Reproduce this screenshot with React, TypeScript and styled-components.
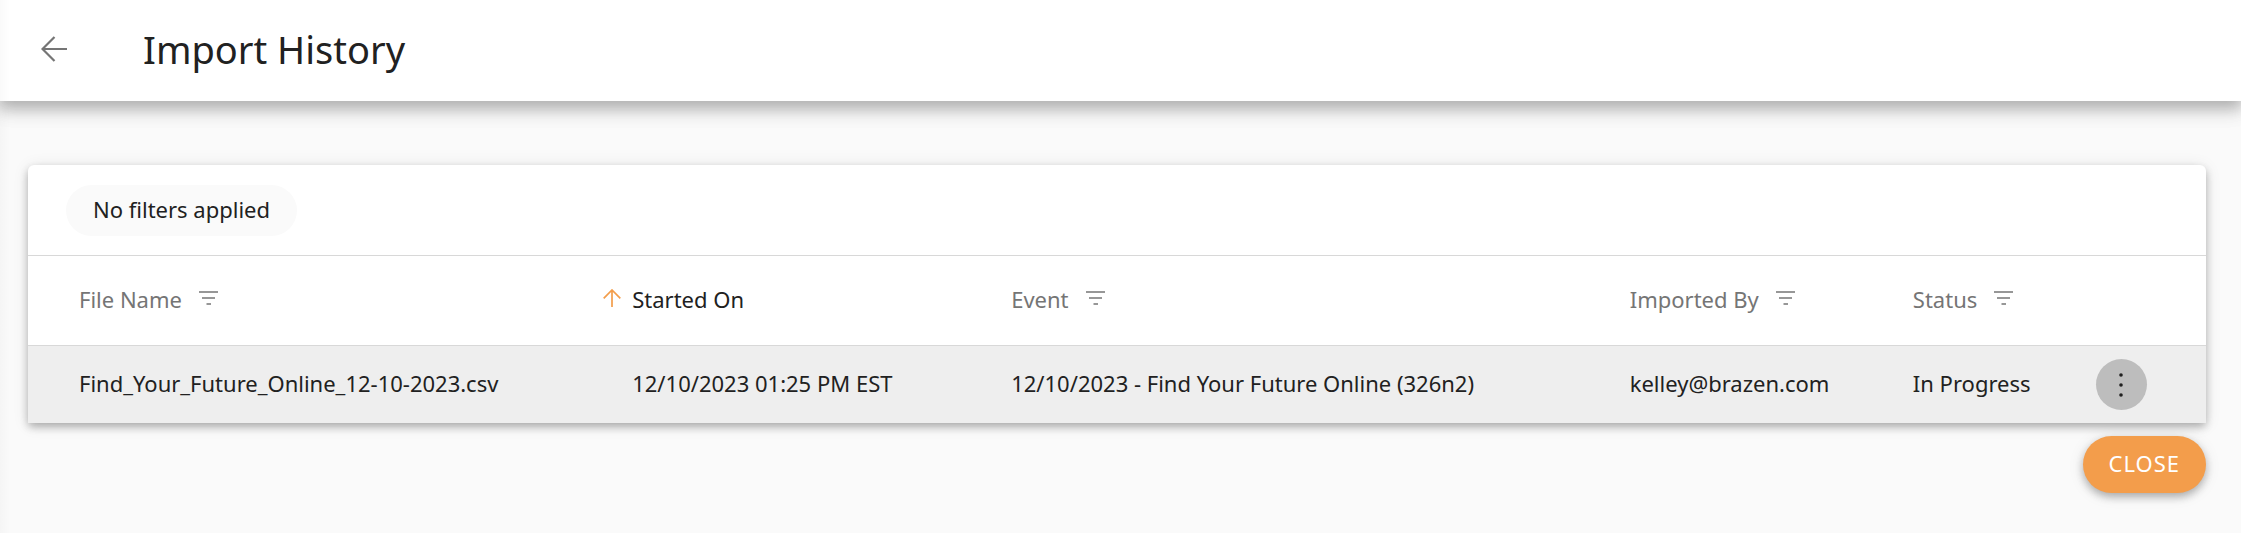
import React from "react";
import styled, { createGlobalStyle } from "styled-components";

const edgeShade = "linear-gradient(to right, rgba(0, 0, 0, 0.02), transparent 10px)";
const raised = `0 4px 8px -1px rgba(0, 0, 0, 0.2), 0 4px 10px rgba(0, 0, 0, 0.1),
  0 2px 16px rgba(0, 0, 0, 0.1)`;

const GlobalStyle = createGlobalStyle`
  *, *::before, *::after { box-sizing: border-box; }
  body {
    margin: 0;
    background: ${edgeShade}, #fafafa;
    color: #212121;
    font-family: "Noto Sans", sans-serif;
    font-size: 22px;
    line-height: 32px;
  }
  button { font: inherit; color: inherit; border: 0; background: none; padding: 0; cursor: pointer; }
`;

const Header = styled.header`
  display: flex;
  align-items: center;
  gap: 64px;
  height: 101px;
  padding: 0 28px 3px;
  background: ${edgeShade}, #fff;
  box-shadow: 0 6px 12px rgba(0, 0, 0, 0.16), 0 10px 16px 2px rgba(0, 0, 0, 0.1),
    0 5px 22px 3px rgba(0, 0, 0, 0.08);
`;

const BackButton = styled.button`
  display: flex;
  align-items: center;
  justify-content: center;
  width: 51px;
  height: 51px;
  color: #757575;
`;

const Title = styled.h1`
  margin: 0;
  font-size: 38px;
  line-height: 52px;
  font-weight: 400;
`;

const Content = styled.main`
  padding: 64px 35px 40px 28px;
`;

const Card = styled.section`
  background: #fff;
  border-radius: 6px 6px 0 0;
  box-shadow: ${raised};
`;

const FilterBar = styled.div`
  display: flex;
  padding: 20px 38px 19px;
`;

const FilterChip = styled.span`
  padding: 8px 27px 11px;
  border-radius: 26px;
  background: #fafafa;
`;

const Table = styled.table`
  width: 100%;
  table-layout: fixed;
  border-collapse: separate;
  border-spacing: 0;
  text-align: left;
  white-space: nowrap;
`;

const Column = styled.col<{ $share?: number }>`
  width: ${({ $share }) => ($share ? `${$share}%` : "auto")};
`;

const HeaderCell = styled.th`
  height: 91px;
  padding: 0 0 3px 51px;
  border-top: 1px solid #d8d8d8;
  border-bottom: 1px solid #d8d8d8;
  font-weight: 400;
`;

const HeaderButton = styled.button<{ $sorted?: boolean }>`
  display: flex;
  align-items: center;
  gap: ${({ $sorted }) => ($sorted ? 11 : 17)}px;
  margin-left: ${({ $sorted }) => ($sorted ? -29 : 0)}px;
  color: ${({ $sorted }) => ($sorted ? "#212121" : "#757575")};
`;

const Glyph = styled.svg<{ $accent?: boolean }>`
  flex: none;
  margin-bottom: 2px;
  color: ${({ $accent }) => ($accent ? "#f39d4b" : "inherit")};
`;

const Cell = styled.td<{ $control?: boolean }>`
  height: 77px;
  padding: 0 0 ${({ $control }) => ($control ? 0 : 3)}px 51px;
  background: #eee;
`;

const MenuButton = styled.button`
  display: flex;
  align-items: center;
  justify-content: center;
  width: 51px;
  height: 51px;
  border-radius: 50%;
  background: #bdbdbd;
`;

const Actions = styled.div`
  display: flex;
  justify-content: flex-end;
  padding-top: 13px;
`;

const CloseButton = styled.button`
  height: 57px;
  padding: 0 26px 3px;
  border-radius: 29px;
  background: #f39d4b;
  color: #fff;
  letter-spacing: 1px;
  box-shadow: ${raised};
`;

const FilterIcon = () => (
  <Glyph width="19" height="14" viewBox="0 0 19 14" fill="currentColor" aria-hidden="true">
    <path d="M0 .2h19v1.600H0zM3 6.200h13v1.600H3zM7.500 12.200h4.500v1.600H7.500z" />
  </Glyph>
);

const filterable = (label: string) => (
  <HeaderCell scope="col">
    <HeaderButton type="button">
      {label}
      <FilterIcon />
    </HeaderButton>
  </HeaderCell>
);

export default function App() {
  return (
    <>
      <GlobalStyle />
      <Header>
        <BackButton type="button" aria-label="Back">
          <svg width="26" height="26" viewBox="0 0 26 26" fill="none" stroke="currentColor" strokeWidth="2.2">
            <path d="M26 13H1.500M13.500 1L1.500 13l12 12" />
          </svg>
        </BackButton>
        <Title>Import History</Title>
      </Header>
      <Content>
        <Card>
          <FilterBar>
            <FilterChip>No filters applied</FilterChip>
          </FilterBar>
          <Table>
            <colgroup>
              <Column $share={25.4} />
              <Column $share={17.4} />
              <Column $share={28.4} />
              <Column $share={13} />
              <Column $share={8.4} />
              <Column />
            </colgroup>
            <thead>
              <tr>
                {filterable("File Name")}
                <HeaderCell scope="col" aria-sort="ascending">
                  <HeaderButton type="button" $sorted>
                    <Glyph $accent width="18" height="18" viewBox="0 0 18 18" fill="none" stroke="currentColor" strokeWidth="1.7" aria-hidden="true">
                      <path d="M9 18V1M.7 9.300L9 1l8.300 8.300" />
                    </Glyph>
                    Started On
                  </HeaderButton>
                </HeaderCell>
                {filterable("Event")}
                {filterable("Imported By")}
                {filterable("Status")}
                <HeaderCell as="td" />
              </tr>
            </thead>
            <tbody>
              <tr>
                <Cell>Find_Your_Future_Online_12-10-2023.csv</Cell>
                <Cell>12/10/2023 01:25 PM EST</Cell>
                <Cell>12/10/2023 - Find Your Future Online (326n2)</Cell>
                <Cell>kelley@brazen.com</Cell>
                <Cell>In Progress</Cell>
                <Cell $control>
                  <MenuButton type="button" aria-label="Row actions">
                    <svg width="4" height="24" viewBox="0 0 4 24" fill="currentColor" aria-hidden="true">
                      <circle cx="2" cy="2" r="1.800" />
                      <circle cx="2" cy="12" r="1.800" />
                      <circle cx="2" cy="22" r="1.800" />
                    </svg>
                  </MenuButton>
                </Cell>
              </tr>
            </tbody>
          </Table>
        </Card>
        <Actions>
          <CloseButton type="button">CLOSE</CloseButton>
        </Actions>
      </Content>
    </>
  );
}
